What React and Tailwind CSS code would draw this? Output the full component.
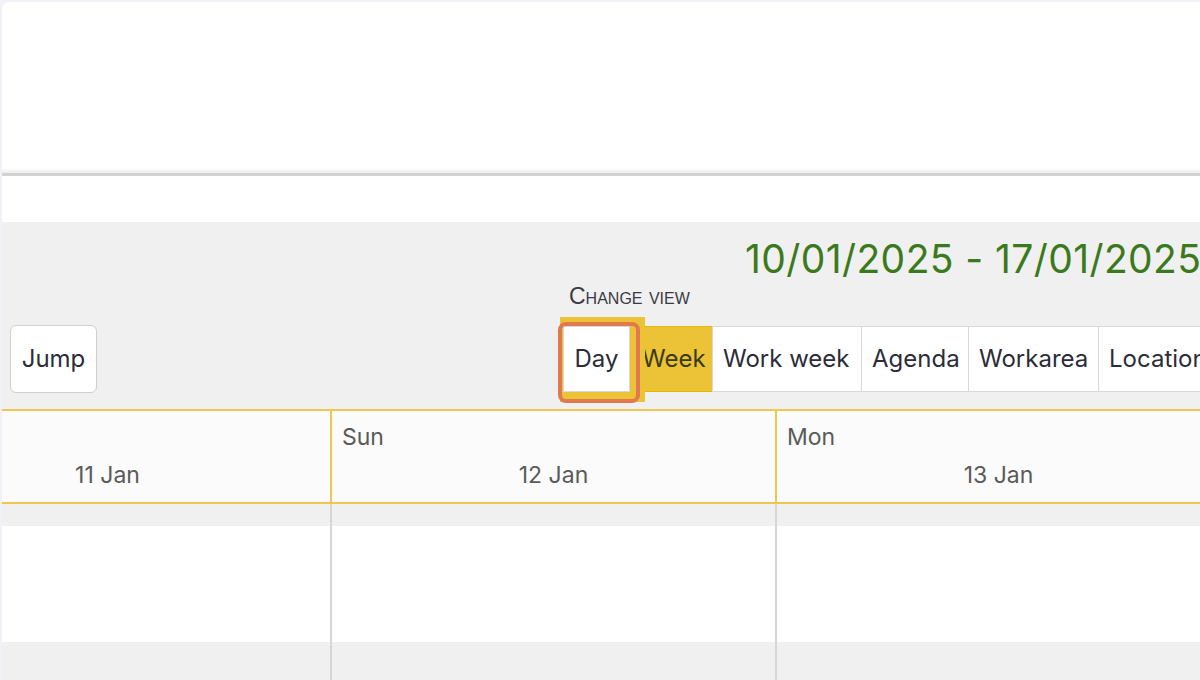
import React from "react";

const views = [
  { label: "Week", w: "w-[83px]", active: true },
  { label: "Work week", w: "w-[150px]" },
  { label: "Agenda", w: "w-[108px]" },
  { label: "Workarea", w: "w-[131px]" },
  { label: "Location", w: "w-[120px]" },
];

const days = [
  { name: "", date: "11 Jan" },
  { name: "Sun", date: "12 Jan" },
  { name: "Mon", date: "13 Jan" },
];

const App = () => {
  return (
    <div
      className="w-[1200px] h-[680px] overflow-hidden bg-[#f2f1f7] pl-[2px] pt-[2px]"
      style={{ fontFamily: "Inter, 'Open Sans', sans-serif" }}
    >
      <div className="h-full bg-white rounded-tl-lg overflow-hidden flex flex-col">
        {/* top blank panel */}
        <div className="h-[166px] shrink-0 bg-white" />
        <div className="h-[5px] shrink-0 bg-gradient-to-b from-white to-[#ececec]" />
        <div className="h-[3px] shrink-0 bg-[#d2d2d2]" />
        <div className="h-[46px] shrink-0 bg-white" />

        {/* toolbar */}
        <div className="bg-[#f0f0f0] shrink-0 flex flex-col">
          <div className="h-[66px] pl-[743px] pt-[14px] whitespace-nowrap text-[39px] leading-[46px] text-[#3b7a1c] tracking-[0.4px]">
            10/01/2025 - 17/01/2025
          </div>
          <div className="flex items-end h-[121px]">
            <button className="shrink-0 ml-[8px] mb-[16px] h-[68px] w-[87px] rounded-md border border-[#cfcfcf] bg-white text-[24px] text-[#2c2c3a]">
              Jump
            </button>
            <div className="shrink-0 ml-[466px] flex flex-col">
              <div
                className="pl-[6px] mb-[17px] text-[23px] leading-[26px] text-[#3a3a44]"
                style={{ fontFamily: "'Liberation Sans', Arial, sans-serif", fontVariant: "small-caps" }}
              >
                Change view
              </div>
              <div className="flex h-[66px] mb-[17px]">
                <div className="relative w-[67px] shrink-0">
                  <div className="absolute -left-[3px] -top-[9px] w-[85px] h-[85px] bg-[#ecc236]" />
                  <button className="relative h-full w-[67px] bg-white border border-[#d8d8d8] text-[24px] text-[#2c2c3a]">
                    Day
                  </button>
                  <div className="absolute -left-[5px] -top-[4px] w-[82px] h-[81px] rounded-lg border-[4px] border-[#e07a4c]" />
                </div>
                {views.map((v) => (
                  <button
                    key={v.label}
                    className={
                      v.active
                        ? `${v.w} shrink-0 h-full bg-[#ecc236] border border-[#e6b800] text-[24px] text-[#3a3a18] pl-[11px] text-left`
                        : `${v.w} shrink-0 h-full bg-white border border-[#d8d8d8] -ml-px text-[24px] text-[#2c2c3a] text-left pl-[10px] whitespace-nowrap`
                    }
                  >
                    {v.label}
                  </button>
                ))}
              </div>
            </div>
          </div>
        </div>

        {/* calendar header */}
        <div className="flex -ml-[117px] shrink-0 h-[95px] border-y-2 border-[#efc74f] bg-[#fbfbfb]">
          {days.map((d, i) => (
            <div
              key={d.date}
              className={`w-[445px] shrink-0 pt-[12px] text-[23px] text-[#5a5a5a] ${
                i > 0 ? "border-l-2 border-[#efc74f]" : ""
              }`}
            >
              <div className="pl-[10px] h-[28px] leading-[28px]">{d.name}</div>
              <div className="text-center leading-[28px] mt-[10px]">{d.date}</div>
            </div>
          ))}
        </div>

        {/* body */}
        <div className="flex -ml-[117px] flex-1">
          {days.map((d, i) => (
            <div
              key={d.date}
              className={`w-[445px] shrink-0 flex flex-col ${
                i > 0 ? "border-l-2 border-[#d6d6d6]" : ""
              }`}
            >
              <div className="h-[22px] bg-[#f0f0f0]" />
              <div className="h-[116px] bg-white" />
              <div className="flex-1 bg-[#f0f0f0]" />
            </div>
          ))}
        </div>
      </div>
    </div>
  );
};

export default App;
